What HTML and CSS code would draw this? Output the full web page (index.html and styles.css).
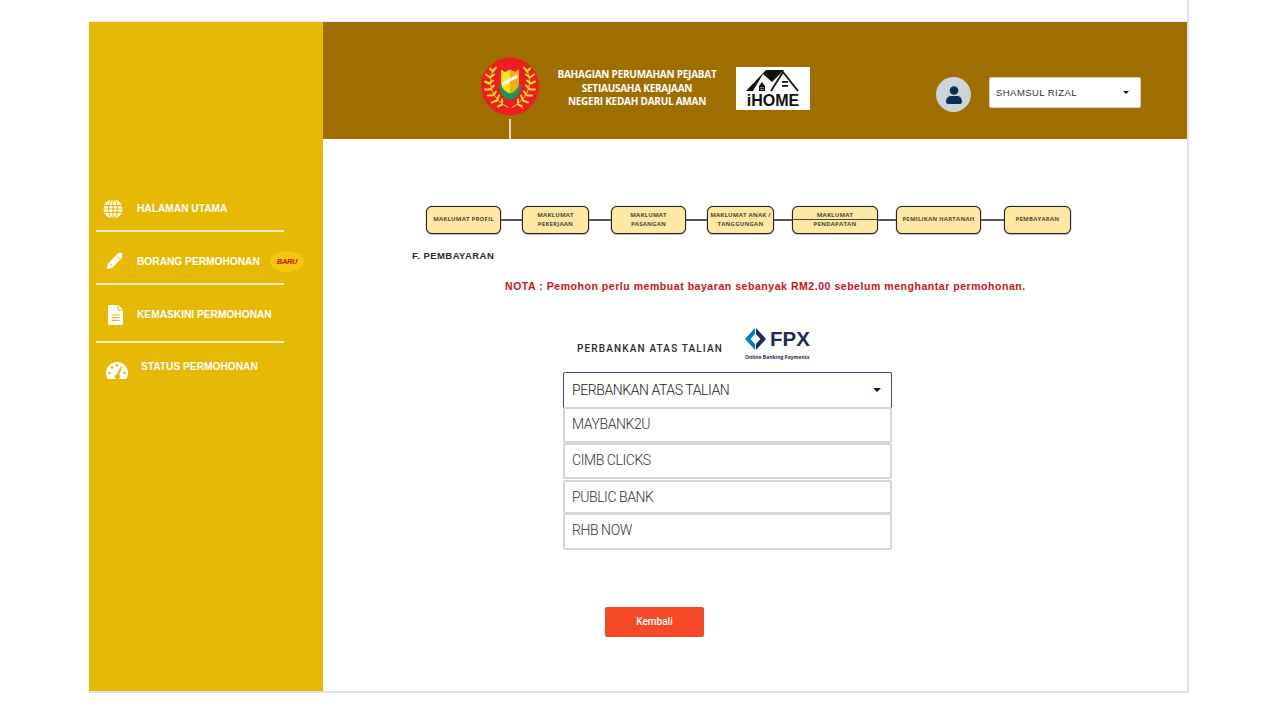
FILE: index.html
```html
<!DOCTYPE html>
<html lang="ms">
<head>
<meta charset="utf-8">
<title>iHOME - Pembayaran</title>
<link rel="stylesheet" href="styles.css">
</head>
<body>
<div class="page">
  <div class="app">
    <aside class="sidebar">
      <nav class="menu">
        <a class="menu-item item-home">
          <svg class="menu-icon" viewBox="0 0 20 20"><circle cx="10" cy="10" r="9.500" fill="#fff"/><g fill="none" stroke="#E6B905" stroke-width="1.100"><ellipse cx="10" cy="10" rx="4.400" ry="9.500"/><path d="M1.400 6.600h17.200M.5 10h19M1.400 13.400h17.200M10 .5v19"/></g></svg>
          <span>HALAMAN UTAMA</span>
        </a>
        <a class="menu-item item-form">
          <svg class="menu-icon" viewBox="0 0 20 20"><path fill="#fff" d="M1.800 19.200l1.300-6L12.600 3.300c1.500-1.500 3.300-1.900 4.500-.9l.5-.4c.6-.4 1.200.2.800.8l-.5.5c.9 1.300.5 3-.9 4.500L7.700 17.700z"/><path fill="none" stroke="#E6B905" stroke-width=".9" d="M4.500 12.600l3.200 3M12.200 5.200l3.300 3.300"/></svg>
          <span>BORANG PERMOHONAN</span>
          <b class="badge">BARU</b>
        </a>
        <a class="menu-item item-update">
          <svg class="menu-icon icon-file" viewBox="0 0 16 20"><path fill="#fff" d="M1 0h8.500v5.500H15V19a1 1 0 0 1-1 1H1a1 1 0 0 1-1-1V1a1 1 0 0 1 1-1zM10.500 0L15 4.500h-4.500z"/><path stroke="#E6B905" stroke-width="1.200" d="M3.500 10h8M3.500 12.700h8M3.500 15.400h8"/></svg>
          <span>KEMASKINI PERMOHONAN</span>
        </a>
        <a class="menu-item item-status">
          <svg class="menu-icon icon-gauge" viewBox="0 0 22 17"><path fill="#fff" d="M11 0a11 11 0 0 1 11 11c0 2.200-.5 4.200-1.500 5.400-.3.400-.7.600-1.200.6H2.700c-.5 0-.9-.2-1.200-.6C.5 15.200 0 13.200 0 11A11 11 0 0 1 11 0z"/><g fill="#E6B905"><circle cx="3.500" cy="11" r="1.200"/><circle cx="6" cy="5.500" r="1.200"/><circle cx="11" cy="3.500" r="1.200"/><circle cx="18.500" cy="11" r="1.200"/><path d="M14.700 4.200l1.300.6-2.800 8.200a2.500 2.500 0 1 1-2.500-.6z"/></g></svg>
          <span>STATUS PERMOHONAN</span>
        </a>
      </nav>
    </aside>
    <div class="main">
      <header class="topbar">
        <div class="crest-wrap">
          <svg class="crest" viewBox="0 0 58 58">
            <defs>
              <g id="wreath" fill="none" stroke="#FCE21B" stroke-width="2" stroke-linecap="round">
                <path stroke-width="1" d="M13 11C6 24 9 40 27 50"/>
                <path d="M12 14l-3-3M12 14l3-4M9 20l-4-3M9 20l4-3M8 26l-4-2M8 26l4-3M9 32l-5 0M9 32l4-4M12 38l-5 0M12 38l3-4M16 43l-5 2M16 43l2-5M21 47l-4 2M21 47l0-5"/>
              </g>
            </defs>
            <circle cx="29" cy="29" r="29" fill="#EE1C25"/>
            <use href="#wreath"/>
            <use href="#wreath" transform="translate(58 0) scale(-1 1)"/>
            <path fill="#0F9D58" d="M18 25c0 10 5 17 11 17s11-7 11-17c-2 5-6 8-11 8s-9-3-11-8z"/>
            <path fill="#FCE21B" d="M20 12l4 2.500 5-2.500 5 2.500 4-2.500v13c0 5-4 9-9 11-5-2-9-6-9-11z"/>
            <path fill="#F6A81C" d="M29 12l5 2.500 4-2.500v13c0 5-4 9-9 11z"/>
            <path fill="#fff" d="M21 25l15-8 1 3-15 8z"/>
          </svg>
          <div class="crest-stem"></div>
        </div>
        <h1 class="agency">BAHAGIAN PERUMAHAN PEJABAT<br>SETIAUSAHA KERAJAAN<br>NEGERI KEDAH DARUL AMAN</h1>
        <div class="ihome">
          <svg class="ihome-roof" viewBox="0 0 74 26">
            <path fill="#111" d="M10 24L30 3h18L36 15l-9-8-10 17z"/>
            <path fill="#fff" d="M17 24l10-13 9 13z"/>
            <path fill="#111" d="M23 24v-5l3-4 3 4v5z"/>
            <path fill="#fff" d="M24.500 20h1v1h-1zM26.500 20h1v1h-1zM24.500 22h1v1h-1zM26.500 22h1v1h-1z"/>
            <path fill="none" stroke="#111" stroke-width="1.800" d="M35 24L47 5l15 19"/>
            <path fill="#111" d="M46 14h6v1.800h-6zM46 18h6v1.800h-6z"/>
          </svg>
          <span class="ihome-name">iHOME</span>
        </div>
        <div class="avatar">
          <svg viewBox="0 0 16 18"><circle cx="8" cy="4.500" r="4.300" fill="#0B2F50"/><path fill="#0B2F50" d="M0 15.500C0 12 2.500 10 5 10h6c2.500 0 5 2 5 5.500 0 1.500-.8 2.500-2 2.500H2c-1.200 0-2-1-2-2.500z"/></svg>
        </div>
        <div class="user-select"><span>SHAMSUL RIZAL</span><i class="caret caret-small"></i></div>
      </header>
      <section class="content">
        <ol class="steps">
          <li class="step step-a">MAKLUMAT PROFIL</li>
          <li class="link link-21"></li>
          <li class="step step-b">MAKLUMAT<br>PEKERJAAN</li>
          <li class="link link-22"></li>
          <li class="step step-a">MAKLUMAT<br>PASANGAN</li>
          <li class="link link-21"></li>
          <li class="step step-b">MAKLUMAT ANAK /<br>TANGGUNGAN</li>
          <li class="link link-18"></li>
          <li class="step step-c">MAKLUMAT<br>PENDAPATAN</li>
          <li class="link link-18"></li>
          <li class="step step-d">PEMILIKAN HARTANAH</li>
          <li class="link link-23"></li>
          <li class="step step-b">PEMBAYARAN</li>
        </ol>
        <h2 class="section-title">F. PEMBAYARAN</h2>
        <p class="note">NOTA : Pemohon perlu membuat bayaran sebanyak RM2.00 sebelum menghantar permohonan.</p>
        <div class="bank-head">
          <span class="bank-label">PERBANKAN ATAS TALIAN</span>
          <div class="fpx">
            <div class="fpx-top">
              <svg class="fpx-mark" viewBox="0 0 21 22"><path fill="#0B78C2" d="M10 0L0 11l10 11v-6L5.500 11 10 6z"/><path fill="#1E2A5A" d="M11 0l10 11-10 11v-6l4.500-5L11 6z"/></svg>
              <span class="fpx-name">FPX</span>
            </div>
            <span class="fpx-sub">Online Banking Payments</span>
          </div>
        </div>
        <div class="bank-list">
          <div class="bank-select"><span>PERBANKAN ATAS TALIAN</span><i class="caret"></i></div>
          <div class="bank-option opt-first">MAYBANK2U</div>
          <div class="bank-option opt-second">CIMB CLICKS</div>
          <div class="bank-option opt-public">PUBLIC BANK</div>
          <div class="bank-option opt-rhb">RHB NOW</div>
        </div>
        <button class="back" type="button">Kembali</button>
      </section>
    </div>
  </div>
</div>
</body>
</html>
```
FILE: styles.css
```css
* { box-sizing: border-box; }
html, body { margin: 0; height: 100%; overflow: hidden; background: #fff; }
body { font-family: "Liberation Sans", Arial, sans-serif; color: #222; }

.page { width: 1189px; height: 693px; padding: 22px 0 0 89px; border-right: 2px solid #e2e2e2; }
.app { display: flex; width: 1098px; height: 671px; border-bottom: 2px solid #e2e2e2; box-shadow: 0 -1px 0 #eee; }

/* sidebar */
.sidebar { flex: 0 0 234px; background: #E6B905; padding: 163px 39px 0 7px; }
.menu { display: flex; flex-direction: column; }
.menu-item { position: relative; display: flex; align-items: center; color: #fff; font-size: 10.200px; font-weight: 700; border-bottom: 2px solid #fbf0bf; padding-left: 41px; white-space: nowrap; }
.menu-icon { position: absolute; width: 20px; height: 20px; left: 7px; }
.item-home { height: 47px; padding-top: 2px; }
.item-home .menu-icon { top: 14px; }
.item-form { height: 53px; padding-top: 8px; }
.item-form .menu-icon { top: 19px; left: 9px; width: 19px; height: 19px; }
.item-update { height: 58px; padding-top: 3px; }
.item-update .menu-icon { left: 12px; top: 20px; height: 20px; width: 16px; }
.item-status { height: 44px; border-bottom: 0; padding: 2px 0 0 45px; }
.item-status .menu-icon { left: 10px; top: 19px; width: 22px; height: 17px; }
.badge { position: absolute; left: 174px; top: 19px; width: 34px; height: 21px; border-radius: 50%; background: #F8C50F; color: #C4121A; font-size: 7.500px; font-style: italic; font-weight: 700; letter-spacing: -.3px; text-align: center; line-height: 21px; }

/* main */
.main { flex: 1; display: flex; flex-direction: column; min-width: 0; }
.topbar { flex: 0 0 117px; background: #9F6E00; display: flex; align-items: flex-start; padding-left: 158px; color: #fff; }
.crest-wrap { display: flex; flex-direction: column; align-items: center; width: 58px; margin-top: 35px; }
.crest { width: 58px; height: 59px; display: block; }
.crest-stem { width: 2px; height: 20px; margin-top: 3px; background: #e8dcc0; }
.agency { margin: 46px 0 0 18px; width: 160px; font: 700 10px/13.500px "Open Sans", sans-serif; letter-spacing: -.25px; text-align: center; }
.ihome { margin: 45px 0 0 19px; width: 74px; height: 43px; background: #fff; display: flex; flex-direction: column; align-items: center; }
.ihome-roof { width: 74px; height: 26px; display: block; }
.ihome-name { font: 700 16px/16px "Liberation Sans", sans-serif; color: #111; }
.avatar { margin: 55px 0 0 126px; width: 35px; height: 35px; border-radius: 50%; background: #CDD3DB; display: flex; align-items: center; justify-content: center; }
.avatar svg { width: 16px; height: 18px; }
.user-select { margin: 55px 0 0 18px; width: 152px; height: 31px; background: #fff; border: 1px solid #d8d3c2; border-radius: 2px; display: flex; align-items: center; justify-content: space-between; padding: 0 11px 0 6px; font-size: 9.500px; letter-spacing: .45px; color: #333; }

.caret { display: block; width: 0; height: 0; border-style: solid; border-width: 4px 4.500px 0; border-color: #14114a transparent transparent; }
.caret-small { border-width: 3px 3.500px 0; }

/* content */
.content { flex: 1; padding: 67px 0 0 103px; background: #fff; position: relative; }
.steps { list-style: none; margin: 0; padding: 0; display: flex; align-items: center; }
.step { position: relative; height: 28px; border: 1px solid #222; border-radius: 6px; background: #FEE8A3; font: 700 6px/9.500px "Open Sans", sans-serif; letter-spacing: .2px; color: #4d4a3c; display: flex; align-items: center; justify-content: center; text-align: center; white-space: nowrap; box-shadow: 0 0 1px #333, 0 1px 1px #ccc; }
.step-a { width: 75px; }
.step-b { width: 67px; }
.step-c { width: 86px; }
.step-d { width: 85px; }
.step-c::after { content: ""; position: absolute; left: -1px; right: -1px; top: 12px; height: 1px; background: #444; }
.link { height: 2px; background: #555; }
.link-21 { width: 21px; }
.link-22 { width: 22px; }
.link-18 { width: 18px; }
.link-23 { width: 23px; }

.section-title { margin: 16px 0 0 -14px; font-size: 9.500px; line-height: 12px; font-weight: 700; letter-spacing: .45px; color: #2a2a2a; }
.note { margin: 18px 0 0 79px; font-size: 10.500px; line-height: 13px; font-weight: 700; letter-spacing: .545px; color: #D0121B; white-space: nowrap; }

.bank-head { display: flex; align-items: flex-start; margin: 34px 0 0 151px; }
.bank-label { margin-top: 16px; font: 500 10px/12px "Roboto", sans-serif; letter-spacing: 1.150px; color: #2b2b2b; width: 168px; white-space: nowrap; }
.fpx { display: flex; flex-direction: column; width: 70px; }
.fpx-top { display: flex; align-items: center; gap: 4px; height: 24px; }
.fpx-mark { width: 21px; height: 22px; display: block; }
.fpx-name { font: 700 20.500px/24px "Liberation Sans", sans-serif; color: #1E2A5A; }
.fpx-sub { margin-top: 3px; font: 700 5px/7px "Open Sans", sans-serif; color: #1E2A5A; white-space: nowrap; }

.bank-list { width: 329px; margin: 11px 0 0 137px; display: flex; flex-direction: column; font: 300 14px/1 "Roboto", sans-serif; letter-spacing: -.42px; color: #333; }
.bank-select, .bank-option { display: flex; align-items: center; background: #fff; }
.bank-select { height: 36px; padding-left: 8px; border: 1px solid #3B4499; border-bottom-color: #b8b8c8; border-radius: 2px 2px 0 0; justify-content: space-between; padding-right: 10px; color: #222; }
.bank-option { border: 2px solid #d6d6d6; border-radius: 2px; height: 36px; padding: 0 0 1px 7px; }
.opt-first { margin-top: -1px; padding-bottom: 2px; }
.opt-second { padding-bottom: 3px; }
.opt-public { margin-top: 1px; height: 34px; padding-bottom: 0; }
.opt-rhb { margin-top: -1px; height: 37px; padding-bottom: 3px; }
.back { display: block; margin: 57px 0 0 179px; width: 99px; height: 30px; border: 0; border-radius: 2px; background: #F44827; color: #fff; font: 500 10px/12px "Roboto", sans-serif; padding-bottom: 2px; }
```
